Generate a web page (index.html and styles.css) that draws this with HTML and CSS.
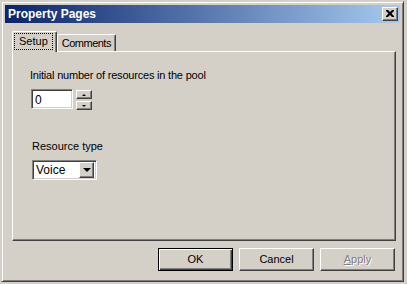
FILE: index.html
```html
<!DOCTYPE html>
<html lang="en">
<head>
    <meta charset="UTF-8">
    <title>Property Pages</title>
    <link rel="stylesheet" href="styles.css">
</head>
<body>
    <div class="window">
        <div class="caption">
            <span class="caption-title">Property Pages</span>
            <div class="close">
                <svg width="8" height="7" viewBox="0 0 8 7">
                    <path d="M0 0h2l2 2 2-2h2v1L5.5 3.5 8 6v1H6L4 5 2 7H0V6l2.5-2.5L0 1z" fill="#000"/>
                </svg>
            </div>
        </div>
        <div class="client">
            <div class="tabs">
                <div class="tab active"><span class="focus">Setup</span></div>
                <div class="tab">Comments</div>
            </div>
            <div class="panel">
                <div class="label first">Initial number of resources in the pool</div>
                <div class="spin">
                    <div class="field">0</div>
                    <div class="spin-btns">
                        <div class="raised sbtn"><span class="tri-up"></span></div>
                        <div class="raised sbtn"><span class="tri-down"></span></div>
                    </div>
                </div>
                <div class="label second">Resource type</div>
                <div class="combo">
                    <span class="combo-text">Voice</span>
                    <div class="raised drop"><span class="tri-down big"></span></div>
                </div>
            </div>
            <div class="buttons">
                <div class="btn default">OK</div>
                <div class="btn">Cancel</div>
                <div class="btn disabled"><u>A</u>pply</div>
            </div>
        </div>
    </div>
</body>
</html>
```

FILE: styles.css
```css
body {
    margin: 0;
    background: #d4d0c8;
    font-family: "Liberation Sans", Arial, sans-serif;
    font-size: 11px;
    color: #000;
}
.window {
    margin: 1px;
    width: 403px;
    height: 281px;
    box-sizing: border-box;
    border: 1px solid;
    border-color: #d4d0c8 #404040 #404040 #d4d0c8;
    box-shadow: inset 1px 1px #fff, inset -1px -1px #808080;
    padding: 3px;
    display: flex;
    flex-direction: column;
}
.caption {
    height: 18px;
    background: linear-gradient(to right, #0a246a, #a6caf0);
    display: flex;
    align-items: center;
    justify-content: space-between;
}
.caption-title {
    color: #fff;
    font-weight: bold;
    font-size: 12px;
    padding-left: 3px;
}
.close {
    width: 16px;
    height: 14px;
    margin-right: 2px;
    box-sizing: border-box;
    background: #d4d0c8;
    border: 1px solid;
    border-color: #fff #404040 #404040 #fff;
    box-shadow: inset -1px -1px #808080;
    display: flex;
    align-items: center;
    justify-content: center;
}
.close svg {
    display: block;
    margin: 0 1px 1px 0;
}
.client {
    padding: 8px 4px 0 7px;
}
.tabs {
    display: flex;
    align-items: flex-end;
    height: 20px;
    position: relative;
    z-index: 1;
}
.tab {
    height: 17px;
    box-sizing: border-box;
    border: 1px solid;
    border-bottom: none;
    border-color: #fff #404040 #fff #fff;
    border-radius: 2px 2px 0 0;
    box-shadow: inset -1px 0 #808080;
    padding: 2px 4px 0 4px;
    letter-spacing: -0.5px;
    background: #d4d0c8;
}
.tab.active {
    height: 21px;
    margin-bottom: -1px;
    padding: 2px 4px 0 2px;
    letter-spacing: 0;
}
.focus {
    display: inline-block;
    outline: 1px dotted #000;
    padding: 0 4px 1px 4px;
    line-height: 14px;
}
.panel {
    height: 190px;
    box-sizing: border-box;
    border: 1px solid;
    border-color: #fff #404040 #404040 #fff;
    box-shadow: inset -1px -1px #808080;
    padding: 17px 0 0 18px;
}
.label {
    line-height: 13px;
    letter-spacing: -0.2px;
}
.label.first {
    margin-left: -1px;
}
.label.second {
    margin-top: 30px;
    margin-left: 1px;
    letter-spacing: 0;
}
.spin {
    display: flex;
    margin-top: 7px;
}
.field {
    width: 42px;
    height: 20px;
    box-sizing: border-box;
    background: #fff;
    border: 1px solid;
    border-color: #808080 #fff #fff #808080;
    box-shadow: inset 1px 1px #404040, inset -1px -1px #d4d0c8;
    padding: 3px 0 0 3px;
    font-size: 12px;
}
.spin-btns {
    margin: 1px 0 0 3px;
    display: flex;
    flex-direction: column;
    gap: 2px;
}
.raised {
    box-sizing: border-box;
    background: #d4d0c8;
    border: 1px solid;
    border-color: #fff #404040 #404040 #fff;
    box-shadow: inset -1px -1px #808080;
    display: flex;
    align-items: center;
    justify-content: center;
}
.sbtn {
    width: 16px;
    height: 9px;
}
.tri-up {
    border-left: 2px solid transparent;
    border-right: 2px solid transparent;
    border-bottom: 2px solid #000;
}
.tri-down {
    border-left: 2px solid transparent;
    border-right: 2px solid transparent;
    border-top: 2px solid #000;
}
.tri-down.big {
    border-left-width: 4px;
    border-right-width: 4px;
    border-top-width: 4px;
}
.combo {
    margin: 7px 0 0 1px;
    width: 65px;
    height: 20px;
    box-sizing: border-box;
    background: #fff;
    border: 1px solid;
    border-color: #808080 #fff #fff #808080;
    box-shadow: inset 1px 1px #404040, inset -1px -1px #d4d0c8;
    padding: 1px 2px 2px 1px;
    display: flex;
    justify-content: space-between;
    align-items: center;
}
.combo-text {
    font-size: 12px;
    padding-left: 2px;
}
.drop {
    width: 15px;
    height: 16px;
}
.buttons {
    display: flex;
    justify-content: flex-end;
    gap: 6px;
    margin: 7px 1px 0 0;
}
.btn {
    width: 75px;
    height: 23px;
    box-sizing: border-box;
    border: 1px solid;
    border-color: #fff #404040 #404040 #fff;
    box-shadow: inset -1px -1px #808080;
    display: flex;
    align-items: center;
    justify-content: center;
    padding-bottom: 1px;
}
.btn.default {
    border-color: #000;
    box-shadow: inset 1px 1px #fff, inset -1px -1px #404040, inset -2px -2px #808080;
}
.btn.disabled {
    color: #808080;
    text-shadow: 1px 1px #fff;
}
```
